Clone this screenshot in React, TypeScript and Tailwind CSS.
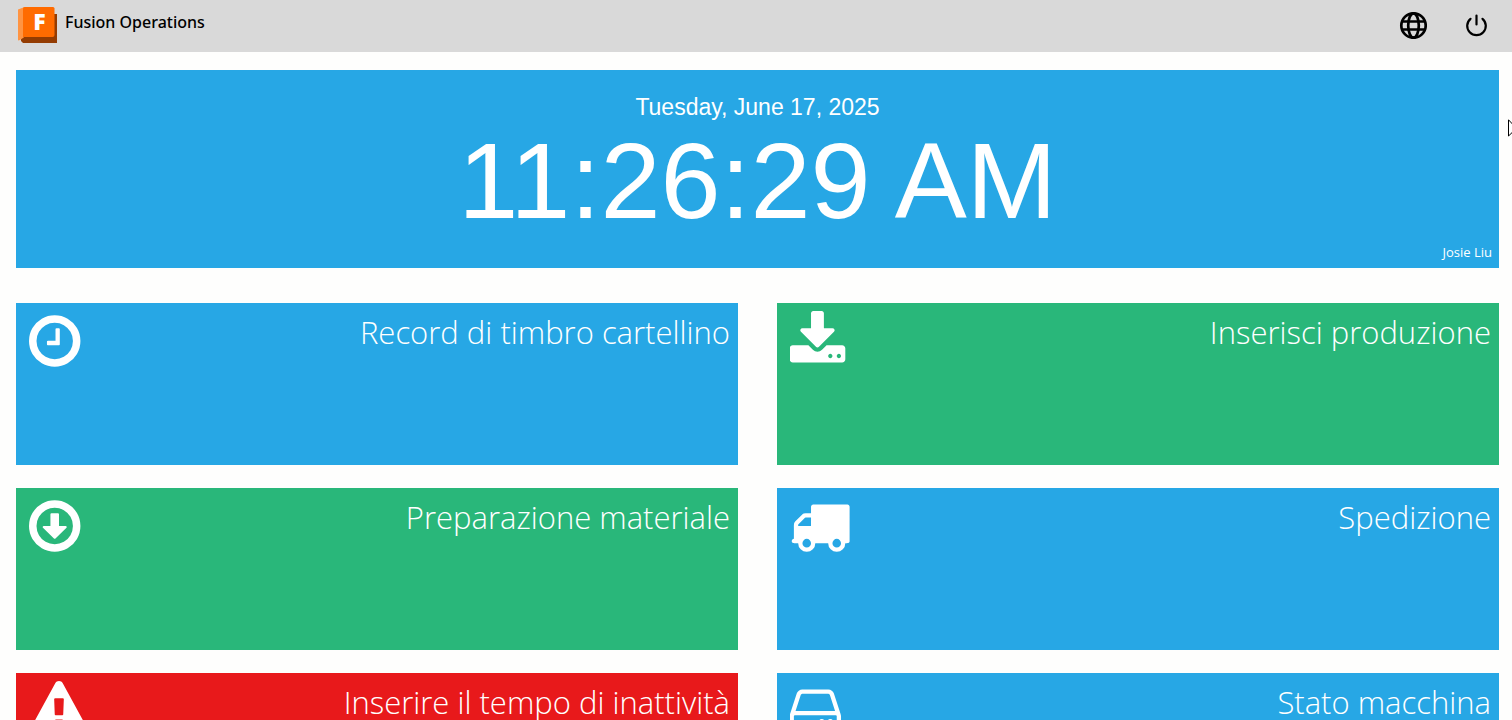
import type { ReactNode } from 'react';

type Tile = {
  title: string;
  color: string;
  viewBox: string;
  icon: ReactNode;
};

const ring =
  'M1440 896q0-148-73-273t-198-198-273-73-273 73-198 198-73 273 73 273 198 198 273 73 273-73 198-198 73-273zm224 0q0 209-103 385.5t-279.5 279.5-385.5 103-385.5-103-279.5-279.5-103-385.5 103-385.5 279.5-279.5 385.5-103 385.5 103 279.5 279.5 103 385.5z';

const tiles: Tile[] = [
  {
    title: 'Record di timbro cartellino',
    color: 'bg-[#27a7e5]',
    viewBox: '128 0 1792 1792',
    icon: (
      <>
        <path d="M1048 544v448q0 14-9 23t-23 9h-320q-14 0-23-9t-9-23v-72q0-14 9-23t23-9h224v-344q0-14 9-23t23-9h64q14 0 23 9t9 23z" />
        <path d={ring} />
      </>
    ),
  },
  {
    title: 'Inserisci produzione',
    color: 'bg-[#29b77a]',
    viewBox: '76 0 1792 1792',
    icon: (
      <path d="M1344 1344q0-26-19-45t-45-19-45 19-19 45 19 45 45 19 45-19 19-45zm256 0q0-26-19-45t-45-19-45 19-19 45 19 45 45 19 45-19 19-45zm128-224v320q0 40-28 68t-68 28h-1472q-40 0-68-28t-28-68v-320q0-40 28-68t68-28h465l135 136q58 56 136 56t136-56l136-136h464q40 0 68 28t28 68zm-325-569q17 41-14 70l-448 448q-18 19-45 19t-45-19l-448-448q-31-29-14-70 17-39 59-39h256v-448q0-26 19-45t45-19h256q26 0 45 19t19 45v448h256q42 0 59 39z" />
    ),
  },
  {
    title: 'Preparazione materiale',
    color: 'bg-[#29b77a]',
    viewBox: '128 0 1792 1792',
    icon: (
      <>
        <path d="M800 512h192q32 0 32 32v352h200q22 0 30 20 8 19-7 35l-328 320q-10 9-23 9t-23-9l-328-320q-15-16-7-35 8-20 30-20h200v-352q0-32 32-32z" />
        <path d={ring} />
      </>
    ),
  },
  {
    title: 'Spedizione',
    color: 'bg-[#27a7e5]',
    viewBox: '12 0 1792 1792',
    icon: (
      <path d="M640 1408q0-52-38-90t-90-38-90 38-38 90 38 90 90 38 90-38 38-90zm-384-512h384v-256h-158q-13 0-22 9l-195 195q-9 9-9 22v30zm1280 512q0-52-38-90t-90-38-90 38-38 90 38 90 90 38 90-38 38-90zm256-1088v1024q0 15-4 26.5t-13.5 18.5-16.5 11.5-23.5 6-22.5 2-25.5 0-22.5-.5q0 106-75 181t-181 75-181-75-75-181h-384q0 106-75 181t-181 75-181-75-75-181h-64q-3 0-22.5.5t-25.5 0-22.5-2-23.5-6-16.5-11.5-13.5-18.5-4-26.5q0-26 19-45t45-19v-320q0-8-.5-35t0-38 2.5-34.5 6.5-37 14-30.5 22.5-30l198-198q19-19 50.5-32t58.5-13h160v-192q0-26 19-45t45-19h1024q26 0 45 19t19 45z" />
    ),
  },
  {
    title: 'Inserire il tempo di inattività',
    color: 'bg-[#e8191b]',
    viewBox: '0 0 1792 1792',
    icon: (
      <path d="M1024 1375v-190q0-14-9.500-23.500t-22.500-9.500h-192q-13 0-22.500 9.500t-9.500 23.500v190q0 14 9.500 23.500t22.500 9.500h192q13 0 22.500-9.500t9.500-23.500zm-2-374l18-459q0-12-10-19-13-11-24-11h-220q-11 0-24 11-10 7-10 21l17 457q0 10 10 16.500t24 6.500h185q14 0 23.500-6.500t10.500-16.500zm-14-934l768 1408q35 63-2 126-17 29-46.500 46t-63.500 17h-1536q-34 0-63.500-17t-46.500-46q-37-63-2-126l768-1408q17-31 47-49t65-18 65 18 47 49z" />
    ),
  },
  {
    title: 'Stato macchina',
    color: 'bg-[#27a7e5]',
    viewBox: '140 0 1792 1792',
    icon: (
      <>
        <circle cx="1088" cy="1216" r="80" />
        <circle cx="1344" cy="1216" r="80" />
        <path d="M1536 1376v-320q0-13-9.500-22.500t-22.500-9.500h-1216q-13 0-22.500 9.500t-9.500 22.500v320q0 13 9.500 22.500t22.500 9.500h1216q13 0 22.500-9.500t9.500-22.500zm-1230-480h1180l-157-482q-4-13-16-21.500t-26-8.500h-782q-14 0-26 8.500t-16 21.500zm1358 160v320q0 66-47 113t-113 47h-1216q-66 0-113-47t-47-113v-320q0-25 16-75l197-606q17-53 63-86t101-33h782q55 0 101 33t63 86l197 606q16 50 16 75z" />
      </>
    ),
  },
];

function Logo() {
  return (
    <span className="relative flex h-9 w-[39px] shrink-0">
      <svg viewBox="0 0 39 36" className="h-9 w-[39px]" aria-hidden="true">
        <path d="M35 7h4v29H5L3 34V30z" fill="#943c02" />
        <path d="M0 2.500L6 .3v30L2 33 0 33.500z" fill="#ff9442" />
        <path d="M6.500 0H35q1.500 0 1.500 1.500V28q0 2-2 2H5V1.500Q5 0 6.500 0z" fill="#ff6b00" />
      </svg>
      <span className="absolute inset-x-0 top-0 pl-1 text-center font-['Open_Sans',sans-serif] text-[23px] leading-[29px] font-extrabold text-white">
        F
      </span>
    </span>
  );
}

function Header() {
  return (
    <header className="flex h-[52px] items-start justify-between bg-[#d9d9d9] pt-[7px] pr-[22px] pl-[18px]">
      <a href="#home" className="flex gap-2 text-black">
        <Logo />
        <span className="font-['Noto_Sans',sans-serif] text-base leading-[30px] font-medium">
          Fusion Operations
        </span>
      </a>
      <nav className="flex gap-[35px] pt-1">
        <button type="button" aria-label="Language" className="size-7">
          <svg viewBox="0 0 28 28" className="size-7" fill="none" stroke="#000" strokeWidth="2.700" aria-hidden="true">
            <circle cx="14.500" cy="14.500" r="12.200" />
            <ellipse cx="14.500" cy="14.500" rx="5.300" ry="12.200" />
            <path d="M3 10.500h23M3 18.500h23" />
          </svg>
        </button>
        <button type="button" aria-label="Sign out" className="size-7">
          <svg viewBox="0 0 28 28" className="size-7" fill="none" stroke="#000" strokeWidth="2.200" strokeLinecap="round" aria-hidden="true">
            <path d="M14.500 4.500v9M8.500 7.800a9.300 9.300 0 1 0 12 0" />
          </svg>
        </button>
      </nav>
    </header>
  );
}

export default function App() {
  return (
    <div className="relative h-screen overflow-hidden bg-[#fefefd]">
      <Header />
      <main className="pt-[18px] pr-[13px] pl-4">
        <section className="flex h-[198px] flex-col bg-[#27a7e5] px-[7px] pt-[22px] pb-[7px] text-white">
          <p className="text-center font-['Liberation_Sans',Arial,sans-serif] text-[23px] leading-[30px]">
            Tuesday, June 17, 2025
          </p>
          <p className="text-center font-['Liberation_Sans',Arial,sans-serif] text-[108px] leading-[118px]">
            11:26:29 AM
          </p>
          <p className="mt-auto text-right font-['Open_Sans',sans-serif] text-[13px] leading-[18px]">Josie Liu</p>
        </section>
        <div className="mt-[35px] grid grid-cols-2 gap-x-[39px] gap-y-[23px]">
          {tiles.map((tile) => (
            <a
              key={tile.title}
              href="#tile"
              className={`flex h-[162px] items-start justify-between pt-2 pr-2 pl-[13px] text-white ${tile.color}`}
            >
              <svg viewBox={tile.viewBox} className="size-[60px] shrink-0" fill="currentColor" aria-hidden="true">
                {tile.icon}
              </svg>
              <span className="font-['Open_Sans',sans-serif] text-[31px] leading-[42px] font-light">{tile.title}</span>
            </a>
          ))}
        </div>
      </main>
      <svg
        viewBox="0 0 12 19"
        className="pointer-events-none absolute top-[119px] -right-2 h-[19px] w-3"
        fill="#fff"
        stroke="#000"
        aria-hidden="true"
      >
        <path d="M.5.800v16.200l3.800-3.600 2.600 5 2-1-2.500-4.900h5.100z" />
      </svg>
    </div>
  );
}
